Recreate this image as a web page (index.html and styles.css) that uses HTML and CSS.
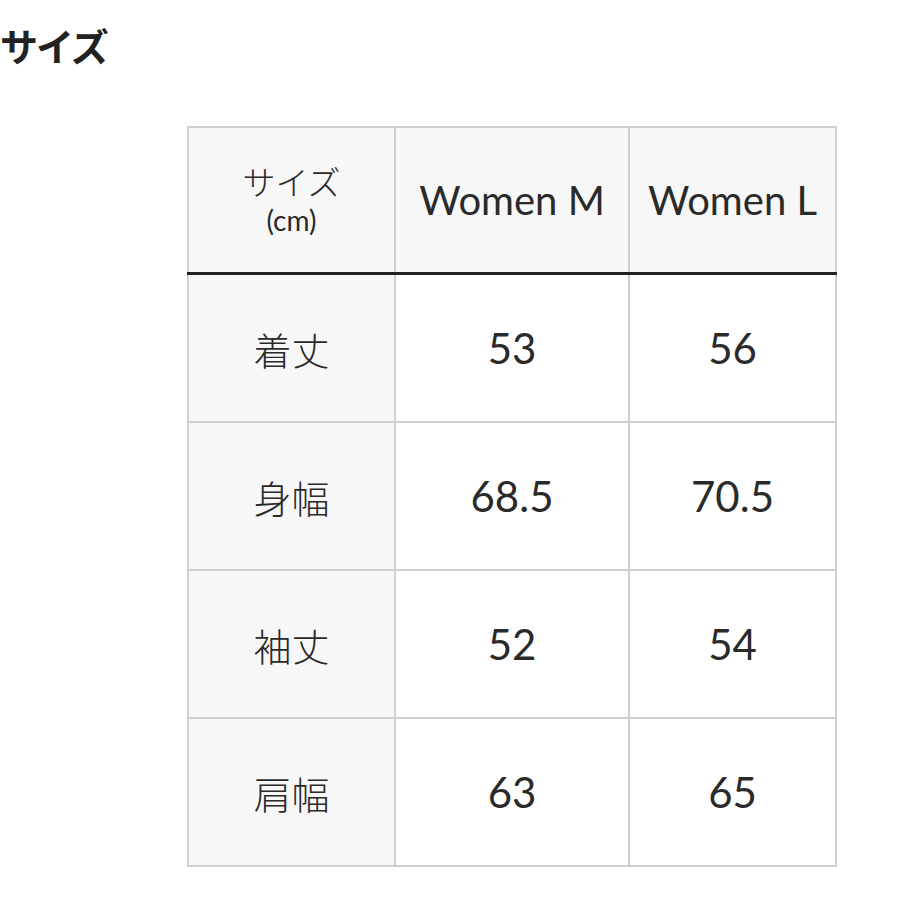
FILE: index.html
```html
<!DOCTYPE html>
<html lang="ja">
<head>
<meta charset="utf-8">
<link rel="stylesheet" href="styles.css">
</head>
<body>
<h1 class="title">サイズ</h1>
<table class="size-table">
  <thead>
    <tr>
      <th class="label-head"><span class="jp">サイズ</span><span class="unit">(cm)</span></th>
      <th>Women M</th>
      <th>Women L</th>
    </tr>
  </thead>
  <tbody>
    <tr><th class="label">着丈</th><td>53</td><td>56</td></tr>
    <tr><th class="label">身幅</th><td>68.5</td><td>70.5</td></tr>
    <tr><th class="label">袖丈</th><td>52</td><td>54</td></tr>
    <tr><th class="label">肩幅</th><td>63</td><td>65</td></tr>
  </tbody>
</table>
</body>
</html>
```
FILE: styles.css
```css
html, body {
  margin: 0;
  padding: 0;
  background: #ffffff;
  color: #2a2a2a;
  font-family: "Noto Sans CJK JP", "Noto Sans", sans-serif;
}
.title {
  margin: 0;
  padding: 20px 0 0 0;
  font-size: 38px;
  line-height: 50px;
  font-weight: 700;
  color: #222;
  letter-spacing: -2px;
}
.size-table {
  margin: 56px 0 0 187px;
  border-collapse: collapse;
  width: 650px;
  table-layout: fixed;
}
.size-table th,
.size-table td {
  border: 2px solid #cfcfcf;
  text-align: center;
  vertical-align: middle;
  font-weight: 400;
  padding: 0;
  height: 146px;
}
.size-table th:nth-child(1) { width: 205px; }
.size-table th:nth-child(2) { width: 232px; }
.size-table thead th {
  background: #f7f7f7;
  border-bottom: 3px solid #222;
  font-family: "Lato", "Noto Sans CJK JP", sans-serif;
  font-size: 40px;
  font-weight: 400;
  height: 144px;
  color: #2a2a2a;
}
.label-head .jp {
  display: block;
  font-family: "Noto Sans CJK JP", sans-serif;
  font-size: 33px;
  line-height: 40px;
  font-weight: 300;
}
.label-head .unit {
  display: block;
  font-family: "Lato", sans-serif;
  font-size: 28px;
  line-height: 38px;
  font-weight: 400;
}
.size-table th.label {
  background: #f7f7f7;
  font-size: 38px;
  font-family: "Noto Sans CJK JP", sans-serif;
  font-weight: 300;
}
.size-table td {
  background: #ffffff;
  font-family: "Lato", sans-serif;
  font-size: 42px;
}
```
